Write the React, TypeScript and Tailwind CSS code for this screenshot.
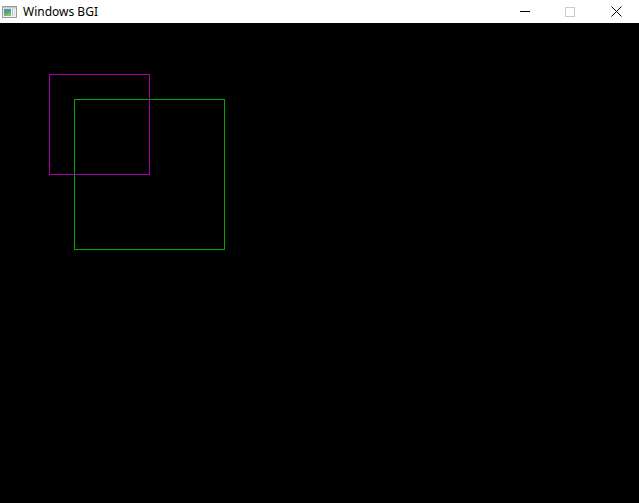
import React from "react";

export default function App() {
  return (
    <div className="w-[639px] h-[503px] flex flex-col bg-black overflow-hidden">
      <div className="h-[23px] bg-white flex items-center shrink-0">
        <div className="w-[23px] h-[23px] flex items-start pl-[2px] pt-[6px]">
          <svg width="15" height="12" viewBox="0 0 15 12">
            <defs>
              <linearGradient id="g" x1="0" y1="0" x2="0.4" y2="1">
                <stop offset="0" stopColor="#5b8fb0" />
                <stop offset="0.5" stopColor="#4f9f8f" />
                <stop offset="1" stopColor="#8cc36a" />
              </linearGradient>
            </defs>
            <rect x="0.5" y="0.5" width="14" height="11" fill="#f2f2f2" stroke="#9a9a9a" />
            <rect x="1" y="1" width="13" height="1.5" fill="#c8c8c8" />
            <rect x="2" y="3" width="7" height="7" fill="url(#g)" />
            <rect x="10" y="3" width="1" height="7" fill="#b8c0c8" />
            <rect x="12" y="3" width="1" height="7" fill="#d8dde2" />
          </svg>
        </div>
        <span
          className="text-[12px] leading-none text-black"
          style={{ fontFamily: '"Noto Sans", "Open Sans", sans-serif' }}
        >
          Windows BGI
        </span>
        <div className="ml-auto flex h-full">
          <div className="w-[45px] h-full flex items-center justify-center">
            <div className="w-[10px] h-[1px] bg-black" />
          </div>
          <div className="w-[46px] h-full flex items-center justify-center">
            <div className="w-[10px] h-[10px] border border-[#cccccc]" />
          </div>
          <div className="w-[46px] h-full flex items-center justify-center">
            <svg width="11" height="11" viewBox="0 0 11 11">
              <path d="M0.5 0.5 L10.5 10.5 M10.5 0.5 L0.5 10.5" stroke="#000" strokeWidth="1" fill="none" />
            </svg>
          </div>
        </div>
      </div>
      <div className="flex-1 bg-black">
        <svg width="639" height="480" viewBox="0 0 639 480" shapeRendering="crispEdges">
          <rect x="74.5" y="76.5" width="150" height="150" fill="none" stroke="#00a800" strokeWidth="1" />
          <rect x="49.5" y="51.5" width="100" height="100" fill="none" stroke="#a800a8" strokeWidth="1" />
        </svg>
      </div>
    </div>
  );
}
